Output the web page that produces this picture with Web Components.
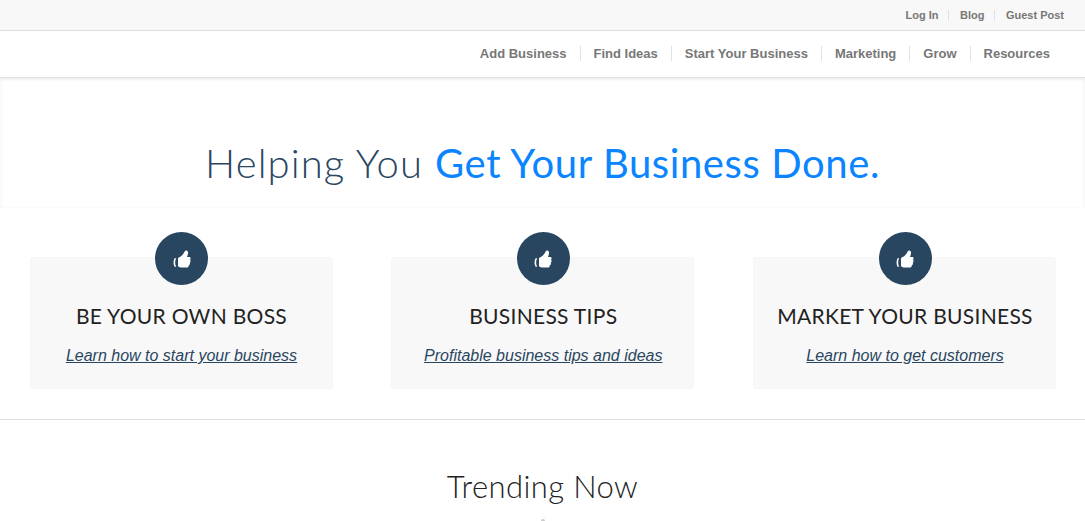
<!DOCTYPE html>
<html>
<head>
<meta charset="utf-8">
<style>
    html, body { margin: 0; padding: 0; background: #fff; overflow: hidden; height: 521px; }
    body { font-family: "Liberation Sans", Arial, sans-serif; }
</style>
</head>
<body>
<site-topbar>
    <nav-link small>Log In</nav-link>
    <nav-link small>Blog</nav-link>
    <nav-link small last>Guest Post</nav-link>
</site-topbar>
<site-nav>
    <nav-link>Add Business</nav-link>
    <nav-link>Find Ideas</nav-link>
    <nav-link>Start Your Business</nav-link>
    <nav-link>Marketing</nav-link>
    <nav-link>Grow</nav-link>
    <nav-link last>Resources</nav-link>
</site-nav>
<hero-banner>Helping You <b slot="accent">Get Your Business Done.</b></hero-banner>
<card-row>
    <info-card heading="BE YOUR OWN BOSS">Learn how to start your business</info-card>
    <info-card heading="BUSINESS TIPS">Profitable business tips and ideas</info-card>
    <info-card heading="MARKET YOUR BUSINESS">Learn how to get customers</info-card>
</card-row>
<trending-section>Trending Now</trending-section>

<script>
class SiteTopbar extends HTMLElement {
    constructor() {
        super();
        this.attachShadow({ mode: 'open' });
        this.shadowRoot.innerHTML = `
            <style>
                :host {
                    display: flex;
                    justify-content: flex-end;
                    align-items: center;
                    height: 30px;
                    padding-right: 21px;
                    background: #f8f8f8;
                    border-bottom: 1px solid #e2e2e2;
                }
            </style>
            <slot></slot>
        `;
    }
}
customElements.define('site-topbar', SiteTopbar);

class SiteNav extends HTMLElement {
    constructor() {
        super();
        this.attachShadow({ mode: 'open' });
        this.shadowRoot.innerHTML = `
            <style>
                :host {
                    display: flex;
                    justify-content: flex-end;
                    align-items: center;
                    height: 44px;
                    padding: 0 35px 2px 0;
                    background: #fff;
                    border-bottom: 1px solid #e4e4e4;
                    box-shadow: 0 1px 3px rgba(0,0,0,.1);
                    position: relative;
                }
            </style>
            <slot></slot>
        `;
    }
}
customElements.define('site-nav', SiteNav);

class NavLink extends HTMLElement {
    constructor() {
        super();
        this.attachShadow({ mode: 'open' });
        this.shadowRoot.innerHTML = `
            <style>
                :host {
                    display: block;
                    font-size: 13px;
                    font-weight: bold;
                    line-height: 15px;
                    color: #777;
                    padding: 0 13px;
                    border-right: 1px solid #e2e2e2;
                }
                :host([small]) {
                    font-size: 11px;
                    line-height: 11px;
                    padding: 0 10px 0 10.5px;
                }
                :host([last]) { border-right: 0; padding-right: 0; }
            </style>
            <slot></slot>
        `;
    }
}
customElements.define('nav-link', NavLink);

class HeroBanner extends HTMLElement {
    constructor() {
        super();
        this.attachShadow({ mode: 'open' });
        this.shadowRoot.innerHTML = `
            <style>
                :host {
                    display: block;
                    height: 130px;
                    box-sizing: border-box;
                    padding-top: 60px;
                    text-align: center;
                    border-left: 3px solid #fafafa;
                    border-right: 3px solid #fafafa;
                    border-bottom: 1px solid #fafafa;
                    font-family: Lato, sans-serif;
                    font-size: 40px;
                    line-height: 50px;
                    font-weight: 300;
                    letter-spacing: 1.1px;
                    color: #2a4661;
                }
                ::slotted(b) { font-weight: 400; color: #0a84ff; letter-spacing: .6px; }
            </style>
            <slot></slot><slot name="accent"></slot>
        `;
    }
}
customElements.define('hero-banner', HeroBanner);

class CardRow extends HTMLElement {
    constructor() {
        super();
        this.attachShadow({ mode: 'open' });
        this.shadowRoot.innerHTML = `
            <style>
                :host {
                    display: grid;
                    grid-template-columns: repeat(3, 303px);
                    column-gap: 58.75px;
                    padding: 24px 0 30px 30px;
                    border-bottom: 1px solid #e0e0e0;
                }
            </style>
            <slot></slot>
        `;
    }
}
customElements.define('card-row', CardRow);

class InfoCard extends HTMLElement {
    constructor() {
        super();
        this.attachShadow({ mode: 'open' });
        this.shadowRoot.innerHTML = `
            <style>
                :host { display: block; position: relative; padding-top: 25px; text-align: center; }
                .box {
                    height: 132px;
                    box-sizing: border-box;
                    margin: 0 .5px 0 -.5px;
                    padding: 45px 0 0 1px;
                    background: #f8f8f8;
                    border: 1px solid #f6f6f6;
                    border-radius: 3px;
                }
                .badge {
                    position: absolute;
                    top: 0;
                    left: 50%;
                    margin-left: -26.5px;
                    width: 53px;
                    height: 53px;
                    border-radius: 50%;
                    background: #294661;
                    display: flex;
                    align-items: center;
                    justify-content: center;
                }
                h3 {
                    margin: 0 0 17px;
                    font-family: Lato, sans-serif;
                    font-size: 21px;
                    line-height: 26px;
                    font-weight: 400;
                    letter-spacing: .3px;
                    color: #222;
                }
                a {
                    font-size: 16px;
                    line-height: 20px;
                    font-style: italic;
                    text-decoration: underline;
                    color: #294661;
                }
            </style>
            <div class="badge">
                <svg width="18" height="18" viewBox="0 0 18 18">
                    <path fill="#fff" d="M5 8C7.5 7 10 5 12 1C12.6 0 14.6 .2 15 2C15.3 3.5 14.6 5.5 14 7L16.2 7C17.8 7 18 9 17 9.8C18 10.8 17.6 12.2 16.8 12.6C17.3 13.8 16.6 15 15.8 15.2C15.8 16.6 15 17.5 13.8 17.5L9 17.5C7.5 17.5 6 17 5 16.2Z"/>
                    <path fill="#fff" d="M3.2 8.2C1.8 10.5 1.8 14 3.2 16.8L1.6 16.8C.2 14 .2 10.6 1.6 8.2Z"/>
                </svg>
            </div>
            <div class="box">
                <h3></h3>
                <a href="#"><slot></slot></a>
            </div>
        `;
    }
    connectedCallback() {
        this.shadowRoot.querySelector('h3').textContent = this.getAttribute('heading');
    }
}
customElements.define('info-card', InfoCard);

class TrendingSection extends HTMLElement {
    constructor() {
        super();
        this.attachShadow({ mode: 'open' });
        this.shadowRoot.innerHTML = `
            <style>
                :host {
                    display: block;
                    height: 102px;
                    overflow: hidden;
                    box-sizing: border-box;
                    padding-top: 46px;
                    text-align: center;
                    font-family: Lato, sans-serif;
                    font-size: 31px;
                    line-height: 40px;
                    font-weight: 300;
                    letter-spacing: .4px;
                    color: #222;
                    background-image:
                        radial-gradient(circle, #f8f8f8 1.2px, transparent 1.5px),
                        radial-gradient(circle, #f8f8f8 1.2px, transparent 1.5px);
                    background-size: 16px 16px;
                    background-position: -8px -7px, 0 1px;
                }
                .peek {
                    width: 4px;
                    height: 4px;
                    margin: 13px auto 0;
                    background: #ccc;
                    border-radius: 2px 2px 0 0;
                }
            </style>
            <slot></slot>
            <div class="peek"></div>
        `;
    }
}
customElements.define('trending-section', TrendingSection);
</script>
</body>
</html>
